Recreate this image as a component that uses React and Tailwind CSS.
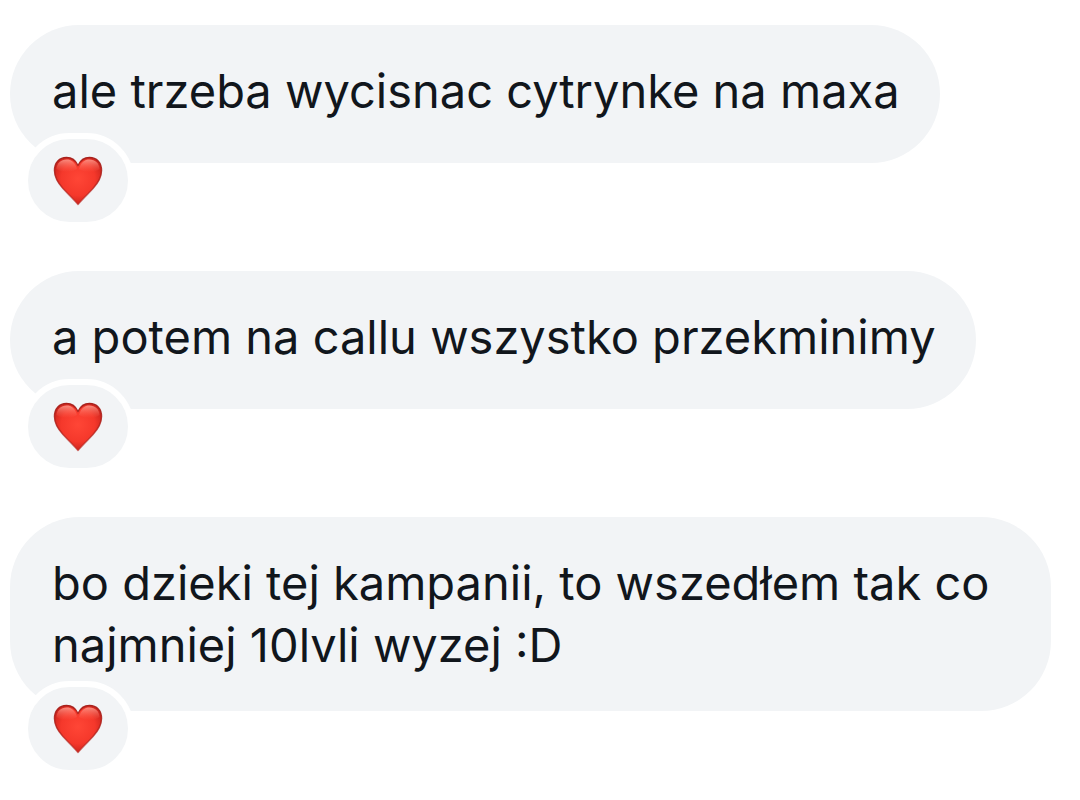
const messages = [
    "ale trzeba wycisnac cytrynke na maxa",
    "a potem na callu wszystko przekminimy",
    "bo dzieki tej kampanii, to wszedłem tak co najmniej 10lvli wyzej :D",
]


const Heart = () => {

    return (
        <svg viewBox="0 0 50 50" className="h-[50px] w-[50px]" aria-hidden="true">
            <defs>
                <radialGradient id="heart-fill" cx="0.5" cy="0.45" r="0.6">
                    <stop offset="0" stopColor="#ff4636" />
                    <stop offset="0.6" stopColor="#f5382b" />
                    <stop offset="1" stopColor="#c4201a" />
                </radialGradient>
                <linearGradient id="heart-shine" x1="0" y1="0" x2="0" y2="1">
                    <stop offset="0" stopColor="#ff9d90" stopOpacity="0.85" />
                    <stop offset="1" stopColor="#ff6a58" stopOpacity="0" />
                </linearGradient>
                <linearGradient id="heart-edge" x1="0" y1="0" x2="0" y2="1">
                    <stop offset="0" stopColor="#a8211c" />
                    <stop offset="1" stopColor="#b8231c" stopOpacity="0.6" />
                </linearGradient>
            </defs>
            <path
                d="M25 9.500C22.500 4 18.500 1.500 13.500 1.500C6.500 1.500 1.500 6.500 1.500 14.500C1.500 21.500 5 27 10 32.500C15 38 20.500 43 25 48.500C29.500 43 35 38 40 32.500C45 27 48.500 21.500 48.500 14.500C48.500 6.500 43.500 1.500 36.500 1.500C31.500 1.500 27.500 4 25 9.500Z"
                fill="url(#heart-fill)"
                stroke="url(#heart-edge)"
                strokeWidth="1.5"
                strokeLinejoin="round"
            />
            <path d="M13.500 3.500C8 3.500 4 7 3.500 13C8 17 18 17 24 13C22 6 18.500 3.500 13.500 3.500Z" fill="url(#heart-shine)" />
            <path d="M36.500 3.500C42 3.500 46 7 46.500 13C42 17 32 17 26 13C28 6 31.500 3.500 36.500 3.500Z" fill="url(#heart-shine)" />
        </svg>
    )
}


const Message = ({ text }) => {

    return (
        <div className="relative w-fit max-w-[1041px]">

            <p className="min-h-[138px] rounded-[70px] bg-[#f2f4f6] py-[35px] pr-[40px] pl-[42px] text-[47px] leading-[62px]">
                {text}
            </p>

            {/* reaction  */}
            <button
                type="button"
                aria-label="Heart reaction"
                className="absolute top-full left-[12px] mt-[-30px] flex h-[95px] w-[112px] items-center justify-center rounded-[48px] border-[6px] border-white bg-[#f2f4f6]"
            >
                <Heart />
            </button>

        </div>
    )
}


export default function App() {

    return (
        <main className="flex min-h-screen flex-col gap-[108px] bg-white px-[10px] pt-[25px] pb-[88px] font-['Inter',sans-serif] text-[#11161c]">

            {messages.map((text) => (
                <Message key={text} text={text} />
            ))}

        </main>
    )
}
